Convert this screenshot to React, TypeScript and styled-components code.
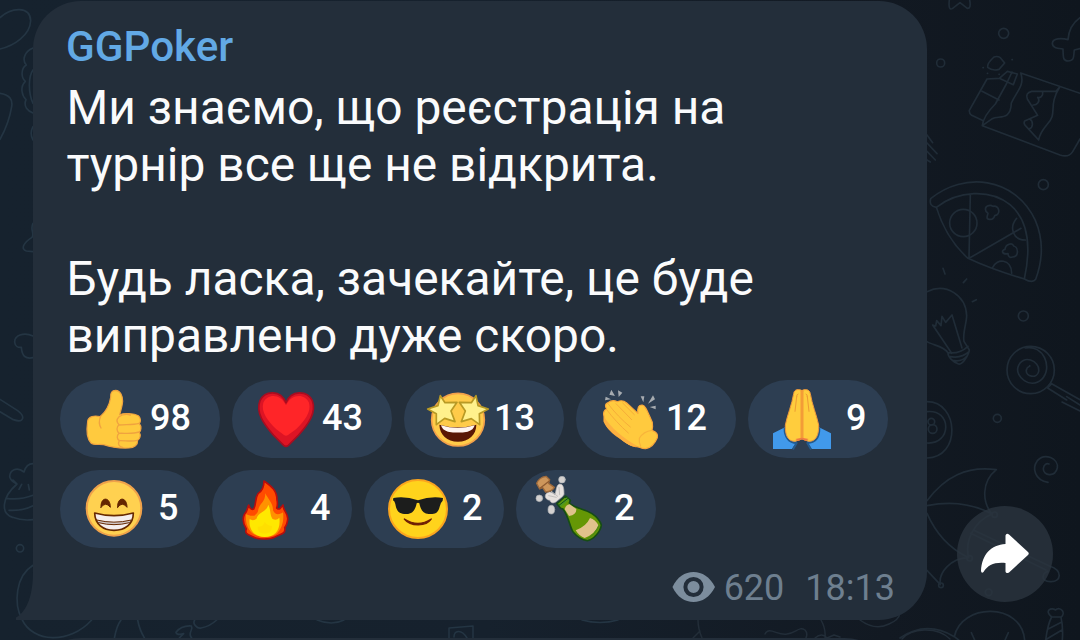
import React from "react";
import styled, { createGlobalStyle } from "styled-components";

const GlobalStyle = createGlobalStyle`
  * { box-sizing: border-box; }
  html, body { margin: 0; padding: 0; overflow: hidden; background: #111a22; }
  body { font-family: Roboto, "Noto Sans", sans-serif; }
`;

const Chat = styled.main`
  position: relative;
  width: 1080px;
  height: 640px;
  overflow: hidden;
  padding: 1px 27px 0 33px;
  background: linear-gradient(90deg, #16222e 0%, #16212d 45%, #121922 82%, #0f161e 100%);
`;

const Wallpaper = styled.svg`
  position: absolute;
  inset: 0;
  fill: none;
  stroke: #202c37;
  stroke-width: 5;
  stroke-linecap: round;
  stroke-linejoin: round;
`;

const MessageRow = styled.div`
  position: relative;
  display: flex;
  align-items: flex-end;
  justify-content: space-between;
`;

const Bubble = styled.article`
  position: relative;
  display: flex;
  flex-direction: column;
  width: 894px;
  height: 619px;
  padding: 21px 27px 0;
  border-radius: 48px 48px 48px 0;
  background: #232e3a;
`;

const Tail = styled.svg`
  position: absolute;
  left: -17px;
  bottom: 0;
  fill: #232e3a;
`;

const Author = styled.h1`
  margin: 0 6px;
  color: #62a9e5;
  font-size: 42.2px;
  font-weight: 500;
  line-height: 50px;
`;

const Message = styled.p`
  margin: 8px 7px 0 6.4px;
  color: #fafbfc;
  font-size: 47.9px;
  line-height: 57px;
  white-space: pre-line;
`;

const Reactions = styled.div`
  display: flex;
  flex-direction: column;
  gap: 12px;
  margin-top: 15px;
`;

const ReactionRow = styled.div`
  display: flex;
  gap: 12px;
`;

const Pill = styled.button<{ $wide: boolean }>`
  display: flex;
  align-items: center;
  gap: ${(p) => (p.$wide ? 0 : 8)}px;
  width: ${(p) => (p.$wide ? 160 : 140)}px;
  height: 78px;
  padding: 0;
  border: 0;
  border-radius: 39px;
  background: #2d3e52;
  color: #fff;
  font: 500 36px/78px Roboto, sans-serif;
`;

const Emoji = styled.svg`
  flex: none;
  width: 90px;
  height: 78px;
  overflow: visible;
  stroke-linecap: round;
  stroke-linejoin: round;
`;

const Count = styled.span`
  position: relative;
  top: -1px;
`;

const Meta = styled.footer`
  display: flex;
  align-items: center;
  justify-content: flex-end;
  height: 42px;
  margin-top: 19px;
  padding-right: 5px;
  color: #6e7f8f;
  font-size: 36px;
  line-height: 42px;
`;

const Eye = styled.svg`
  margin: 0 8px 2px 0;
`;

const Time = styled.time`
  margin-left: 21px;
`;

const Share = styled.button`
  display: grid;
  place-items: center;
  width: 96px;
  height: 96px;
  margin-bottom: 18px;
  padding: 0;
  border: 0;
  border-radius: 50%;
  background: rgba(42, 52, 62, 0.8);
`;

const NextBubble = styled.div`
  position: relative;
  width: 860px;
  height: 60px;
  margin-top: 18px;
  border-radius: 48px 48px 0 0;
  background: #232e3a;
`;

const ThumbsUp = () => (
  <Emoji viewBox="30 30 270 234">
    <path d="M150 140C165 128 178 107 182 82C181 69 185 61 197 61C211 62 218 77 218 94C217 108 213 121 209 134C223 128 252 130 265 137C274 144 272 156 268 161C275 169 274 181 268 187C274 197 269 207 263 211C264 224 253 234 237 234C214 235 187 233 161 224C145 222 131 226 123 219C111 207 109 180 113 153C115 140 133 135 150 140Z" fill="#ffca3e" stroke="#f0a33f" strokeWidth="3.5" />
    <path d="M152 139C146 153 148 166 153 174M267 160C247 166 223 162 207 165M268 186C246 193 223 189 207 190M262 211C245 216 224 211 208 212M206 142C199 149 200 157 207 164C198 171 200 183 207 190C199 198 201 207 208 212C202 222 207 230 218 232M206 141C216 134 230 132 241 135" fill="none" stroke="#f0a33f" strokeWidth="4" />
  </Emoji>
);

const Heart = () => (
  <Emoji viewBox="546 30 270 234">
    <path d="M708 98C692 60 646 60 630 92C616 127 641 162 671 196L701 226Q708 232 715 226L745 196C776 162 800 127 787 92C770 60 724 60 708 98Z" fill="#dd1424" stroke="#a80d20" strokeWidth="5" />
    <path d="M708 106C692 70 652 70 640 98C632 126 654 153 679 178L702 195Q708 199 714 195L738 178C763 153 785 126 777 98C765 70 724 70 708 106Z" fill="#ff2528" />
  </Emoji>
);

const Starry = () => (
  <Emoji viewBox="42 30 270 234">
    <circle cx="204" cy="149" r="79" fill="#ffcb49" stroke="#f3a04a" strokeWidth="5" />
    <path d="M148 164Q203 180 259 164C259 194 236 215 204 215C171 215 149 194 148 164Z" fill="#5a1704" />
    <path d="M153 166Q203 181 254 166Q251 180 233 185Q203 190 174 185Q156 180 153 166Z" fill="#fff4ef" />
    <g fill="#fff18c" stroke="#b89a25" strokeWidth="5">
      <path d="M151 77L165 98L201 97L183 123L195 155L164 145L139 164L139 131L113 117L144 107Z" />
      <path d="M258 77L244 98L208 97L226 123L214 155L244 146L269 164L268 131L295 117L264 107Z" />
    </g>
  </Emoji>
);

const Clap = () => (
  <Emoji viewBox="558 30 270 234">
    <path d="M642 140Q637 123 650 117Q641 103 654 98Q667 88 682 95Q698 88 710 99L744 130Q740 104 757 105C767 106 773 126 787 157Q789 171 786 181Q806 188 802 203Q790 232 767 236C755 237 746 229 739 230C718 232 698 208 680 198C666 188 650 174 642 154Z" fill="#ffca3e" stroke="#f7a53c" strokeWidth="3.5" />
    <path d="M642 140C662 172 700 205 742 228L726 227C705 222 692 206 680 198C666 188 650 174 642 154Z" fill="#fdb040" />
    <path d="M650 119C668 143 691 168 715 189M654 101C673 127 696 150 721 171M678 101L725 149M698 99L733 134" fill="none" stroke="#f6ad39" strokeWidth="3" />
    <path d="M786 181Q760 184 748 205Q746 216 752 229" fill="none" stroke="#f8b43b" strokeWidth="3.5" />
    <path d="M664 59L675 78L658 74ZM684 61L697 68L686 81ZM647 80L663 88L645 91ZM752 79L763 79L760 97ZM789 76L795 88L774 101ZM779 111L797 107V118Z" fill="#a6abb0" />
  </Emoji>
);

const Pray = () => (
  <Emoji viewBox="294 30 270 234">
    <path d="M369 190L405 172L416 202L440 215L426 237H369ZM543 190L507 172L498 202L471 215L485 237H543Z" fill="#4199eb" />
    <path d="M404 175C403 201 417 218 440 219L430 236M508 175C508 201 496 218 472 219L482 236" fill="none" stroke="#235a8e" strokeWidth="6" />
    <path d="M456 62C448 56 432 57 431 71C426 103 412 135 406 165C405 196 414 214 435 214L456 207L476 214C497 215 507 196 506 165C500 136 486 103 481 71C479 57 463 56 456 62Z" fill="#ffcd3d" stroke="#ed973c" strokeWidth="3" />
    <path d="M456 64V202" stroke="#f39c37" strokeWidth="9" />
    <path d="M440 80L435 124M472 80L477 124M444 72Q439 73 440 80M468 72Q473 73 472 80" fill="none" stroke="#ed9c34" strokeWidth="3" />
    <path d="M436 207L456 203L476 207L466 213L456 207L446 213Z" fill="#f07a43" />
  </Emoji>
);

const Grin = () => (
  <Emoji viewBox="30 300 270 234">
    <circle cx="192" cy="415" r="82" fill="#ffd150" stroke="#efa24b" strokeWidth="6" />
    <path d="M153 412C151 379 181 379 181 412Q167 393 153 412ZM203 412C201 379 231 379 231 412Q217 393 203 412Z" fill="#652500" stroke="#652500" strokeWidth="3" />
    <path d="M134 429Q192 445 250 429C250 463 225 481 192 481C159 481 135 463 134 429Z" fill="#f5eeee" stroke="#672900" strokeWidth="5" />
    <path d="M140 450Q192 463 244 450Q243 455 238 458Q192 470 146 458Q141 455 140 450Z" fill="#d2c8c8" stroke="#672900" strokeWidth="3" />
  </Emoji>
);

const Fire = () => (
  <Emoji viewBox="486 300 270 234">
    <path d="M642 333C661 347 681 359 681 390Q684 402 680 414C690 422 691 413 699 405C698 422 716 430 713 449C711 462 709 468 704 473C709 493 688 492 675 501C659 509 625 509 610 501C594 493 583 492 589 477C577 458 578 444 583 433C593 425 591 415 596 405C599 413 603 421 611 417C620 401 614 385 624 371C641 360 642 345 642 333Z" fill="#ff4b00" stroke="#b80d0d" strokeWidth="5" />
    <path d="M646 370C653 386 670 400 669 421C676 439 692 432 699 427C703 453 695 478 678 493C658 505 624 503 606 489C590 473 586 451 588 433C601 438 616 443 624 424C626 401 646 398 646 370Z" fill="#ff9200" />
    <path d="M655 404C663 420 659 435 667 446Q679 453 688 443C693 480 675 501 644 501C614 501 595 480 599 447Q607 454 619 447C627 423 647 430 655 404Z" fill="#ffe800" />
    <path d="M644 456C650 462 653 467 666 468C665 482 661 491 644 491C628 491 623 482 623 470C638 471 641 463 644 456Z" fill="#ffdf00" />
  </Emoji>
);

const Cool = () => (
  <Emoji viewBox="-78 300 270 234">
    <circle cx="84" cy="417" r="87" fill="#ffd31c" stroke="#fba51f" strokeWidth="6" />
    <path d="M10 384Q46 378 84 391Q122 378 159 384L158 392Q151 398 149 410C144 432 132 433 116 432C99 431 92 419 88 400Q84 396 80 400C76 420 67 433 48 432C29 432 20 426 16 402Q14 393 9 391Z" fill="#1c1d1c" />
    <path d="M43 447C61 470 108 471 124 447Q84 473 43 447Z" fill="#702005" stroke="#702005" strokeWidth="4" />
  </Emoji>
);

const Champagne = () => (
  <Emoji viewBox="378 300 270 234">
    <g fill="#d3d1d0" stroke="#a9acb0" strokeWidth="2">
      <circle cx="516" cy="329" r="10" />
      <circle cx="448" cy="385" r="10" />
      <ellipse cx="484" cy="419" rx="10" ry="13" />
    </g>
    <path d="M500 394C492 402 480 399 480 391C466 390 462 377 470 370C481 361 488 370 495 374C499 361 499 344 509 342C521 342 522 357 522 373L518 379Z" fill="#e6e1de" stroke="#b9b8b8" strokeWidth="2" />
    <path d="M507 352L509 374M476 377L499 382M483 363L503 379" stroke="#c3c0be" strokeWidth="3" />
    <path d="M440 340Q447 322 468 319L479 329L476 340L493 352Q486 364 467 366L458 353L449 357Z" fill="#cd965b" stroke="#9e6a3c" strokeWidth="4" />
    <path d="M451 354L478 333" stroke="#8e5b31" strokeWidth="4" />
    <path d="M501 401L527 378L541 391L538 399C556 416 584 416 606 431C621 441 631 455 634 465C632 485 610 509 592 512C575 510 560 499 550 487C538 469 538 443 519 417L512 415Z" fill="#659705" stroke="#164d15" strokeWidth="5" />
    <path d="M506 404L531 382L537 389L513 410Z" fill="#4b9821" />
    <path d="M507 406L534 385" stroke="#164d15" strokeWidth="3" />
    <path d="M524 418Q527 405 539 403L559 417Q560 434 537 438Z" fill="#dec28b" />
    <path d="M557 481Q589 469 600 444Q616 448 625 466Q616 492 584 504Q568 499 557 481Z" fill="#e1c28b" />
    <path d="M627 467Q616 492 592 507" fill="none" stroke="#4e8a14" strokeWidth="4" />
  </Emoji>
);

const reactions = [
  [
    { icon: ThumbsUp, count: 98 },
    { icon: Heart, count: 43 },
    { icon: Starry, count: 13 },
    { icon: Clap, count: 12 },
    { icon: Pray, count: 9 },
  ],
  [
    { icon: Grin, count: 5 },
    { icon: Fire, count: 4 },
    { icon: Cool, count: 2 },
    { icon: Champagne, count: 2 },
  ],
];

const third = "scale(.33333)";

const Doodles = () => (
  <Wallpaper width="1080" height="640" viewBox="0 0 1080 640" aria-hidden="true">
    {/* snack bag, dots and plane */}
    <g transform={`translate(900 0) ${third}`}>
      <path d="M148 0Q144 34 158 25L180 8L202 25Q214 26 209 0" />
      <circle cx="311" cy="100" r="15" />
      <circle cx="122" cy="189" r="12" />
      <path d="M263 202Q260 191 282 171Q292 167 301 173L314 189L297 208Q278 214 263 202Z" />
      <path d="M261 237L298 235L322 214L352 222M261 237L208 331Q207 341 215 346L250 362M246 274L297 300M298 235L340 254L352 222M336 216L319 252L286 312Q250 348 247 377L480 465Q506 474 518 455L540 417M362 219L540 280M362 219C376 255 349 275 334 309C332 365 295 345 277 356L247 377" />
      <path d="M479 261L468 274H395Q375 279 382 297L413 346L374 363Q369 370 379 380L416 420Q419 400 440 375C476 338 442 321 479 261M428 277C430 288 420 295 413 292C423 304 410 316 399 315M389 357C401 364 399 383 389 386" />
      <path d="M540 53Q507 76 504 119C483 113 458 115 457 130C457 145 474 145 489 147C490 171 488 182 504 183C525 182 520 168 523 150L540 146" />
      <path d="M81 405L98 428M81 429L111 461M81 454L106 480M81 480L91 486" />
      <path d="M249 203h1M262 220h1M336 179h1M297 223h1" />
    </g>
    {/* pizza, bulb and lollipop */}
    <g transform={`translate(900 170) ${third}`}>
      <circle cx="430" cy="44" r="15" />
      <path d="M92 86C190 5 344 19 406 151C430 207 428 271 407 328Q398 341 373 327C391 244 392 156 330 104C271 56 174 61 109 112Q86 109 92 86ZM109 112Q138 206 204 265Q274 298 373 327M211 73L207 265L363 175" />
      <circle cx="190" cy="159" r="41" />
      <path d="M350 145C327 172 338 210 376 210M277 294C289 263 335 266 335 310" />
      <path d="M258 124C251 108 270 103 279 109C298 105 304 133 284 137Q280 150 268 148C257 148 262 137 264 130Z" />
      <path d="M315 238C317 222 337 217 341 228C356 232 357 260 338 261Q325 265 324 251C304 254 304 240 315 238Z" />
      <path d="M129 295L135 312M200 327L190 338M217 395L229 389" />
      <path d="M81 365C139 337 198 377 200 437C199 464 187 491 192 514L208 540C207 553 188 585 176 582C158 576 143 560 144 548C130 527 98 526 81 515M155 550L98 465L107 468L110 452L123 467L126 439L137 457L156 435L186 534M144 548Q178 553 204 529M147 559Q183 567 207 545M157 571Q185 577 201 558" />
      <circle cx="370" cy="438" r="15" />
      <circle cx="392" cy="600" r="71" />
      <path d="M376 534C430 522 460 594 425 628C390 659 345 620 354 591C367 550 421 572 416 604C411 628 376 620 379 600C382 586 391 592 389 587M455 641L540 689M443 654L500 690M443 654L455 641" />
    </g>
    {/* pool ball, swirl, umbrella, cupcake */}
    <g transform={`translate(900 380) ${third}`}>
      <path d="M81 65C178 65 183 233 81 234M81 95C157 87 155 194 81 189" />
      <circle cx="94" cy="125" r="10" />
      <circle cx="98" cy="147" r="13" />
      <circle cx="292" cy="115" r="12" />
      <path d="M444 307C405 301 395 265 412 242C434 217 476 235 472 264C464 294 429 286 430 266C431 253 440 249 447 252" />
      <path d="M500 50L540 75M486 66L540 93" />
      <path d="M81 362C135 290 200 257 289 269C244 305 246 367 276 402Q188 355 81 377M81 400Q121 491 202 531M276 402C225 423 193 481 206 533C151 534 115 579 121 614L81 571M220 450L450 559C489 572 484 607 451 605C419 604 427 578 443 574M212 460L438 570" />
      <circle cx="284" cy="404" r="8" />
      <circle cx="209" cy="535" r="8" />
      <circle cx="123" cy="616" r="7" />
      <circle cx="266" cy="637" r="10" />
      <path d="M0 774Q79 720 163 770C183 670 364 665 374 780M163 770L176 780M214 758L224 780M325 758L315 780" />
      <path d="M437 780C441 750 446 727 455 711C431 692 455 680 466 690C482 677 499 699 483 712Q490 740 487 780M455 711H483M443 748L484 727M439 778L487 749" />
    </g>
    {/* left margin and bottom strip */}
    <g stroke="#243543">
      <g transform={third}>
        <path d="M0 53C35 21 90 18 92 62C90 106 42 137 0 147M0 280Q41 286 35 320Q27 370 0 418M99 144C72 155 66 181 79 195C62 205 63 234 76 244C58 262 67 289 78 299C69 320 84 333 99 339M99 210C84 230 85 280 99 310M99 380Q88 400 99 420" />
        <path d="M99 670C89 690 105 700 96 712C69 729 62 747 79 753L99 755M99 1008Q79 999 60 1005C35 1015 42 1045 64 1042C66 1069 78 1078 99 1073M0 1198L53 1232C77 1250 72 1270 40 1259L0 1235" />
      </g>
      <g transform={`translate(0 430) ${third}`}>
        <path d="M99 101Q79 101 72 126C50 108 29 121 29 141Q34 155 51 162C4 203 2 251 38 262Q66 273 99 269M51 162L39 150M65 163L57 178M85 164L88 180M18 205Q60 211 99 196M27 241Q68 243 99 227" />
        <circle cx="60" cy="355" r="11" />
        <path d="M99 406C47 438 40 520 66 568C98 638 208 644 275 570M343 625Q350 587 363 570M413 570Q418 599 434 625" />
        <path d="M528 607Q544 586 574 588C582 600 561 607 575 624M528 607Q532 617 551 611L538 624M584 570C576 582 593 597 603 594Q630 589 650 570" />
      </g>
      <path d="M449 639V628L473 626V639M454 637C454 631 461 628 467 638M317 620Q332 626 344 620M582 620Q600 625 618 620" strokeWidth="1.5" />
      <path d="M698 620Q698 629 702 638M693 638L700 631M765 634C769 626 778 636 787 634C796 633 799 626 805 630Q808 633 806 638M821 620Q826 629 825 638M815 638Q822 632 827 638L834 635L840 637M860 620Q875 631 889 624Q899 620 900 613M902 639C911 628 937 626 950 639" stroke="#222d38" strokeWidth="1.5" />
    </g>
  </Wallpaper>
);

export default function App() {
  return (
    <>
      <GlobalStyle />
      <Chat>
        <Doodles />
        <MessageRow>
          <Bubble>
            <Tail width="18" height="48" viewBox="0 0 18 48">
              <path d="M18 0H17C17 21 12 39 0 45.5V48H18Z" />
            </Tail>
            <Author>GGPoker</Author>
            <Message>
              {"Ми знаємо, що реєстрація на\nтурнір все ще не відкрита.\n\nБудь ласка, зачекайте, це буде\nвиправлено дуже скоро."}
            </Message>
            <Reactions>
              {reactions.map((row, index) => (
                <ReactionRow key={index}>
                  {row.map(({ icon: Icon, count }, i) => (
                    <Pill key={i} $wide={count > 9}>
                      <Icon />
                      <Count>{count}</Count>
                    </Pill>
                  ))}
                </ReactionRow>
              ))}
            </Reactions>
            <Meta>
              <Eye width="44" height="30" viewBox="0 0 44 30">
                <path d="M.5 15C5 5 13 0 21.5 0S38 5 43 15C38 25 30 30 21.5 30S5 25 .5 15Z" fill="#7c8d9d" />
                <circle cx="21.5" cy="15" r="8.1" fill="#7c8d9d" stroke="#232e3a" strokeWidth="4" />
              </Eye>
              <span>620</span>
              <Time>18:13</Time>
            </Meta>
          </Bubble>
          <Share aria-label="Share">
            <svg width="50" height="42" viewBox="0 0 50 42">
              <path d="M26 1.5Q27 0 29 1.5L48 19Q49.5 20.5 48 22L29 39.5Q26 41 25.5 38.5V30C14 29 8 32 3.5 39Q1.5 41 1 38C2 21 11 12 25.5 11V2.5Z" fill="#fff" />
            </svg>
          </Share>
        </MessageRow>
        <NextBubble />
      </Chat>
    </>
  );
}
